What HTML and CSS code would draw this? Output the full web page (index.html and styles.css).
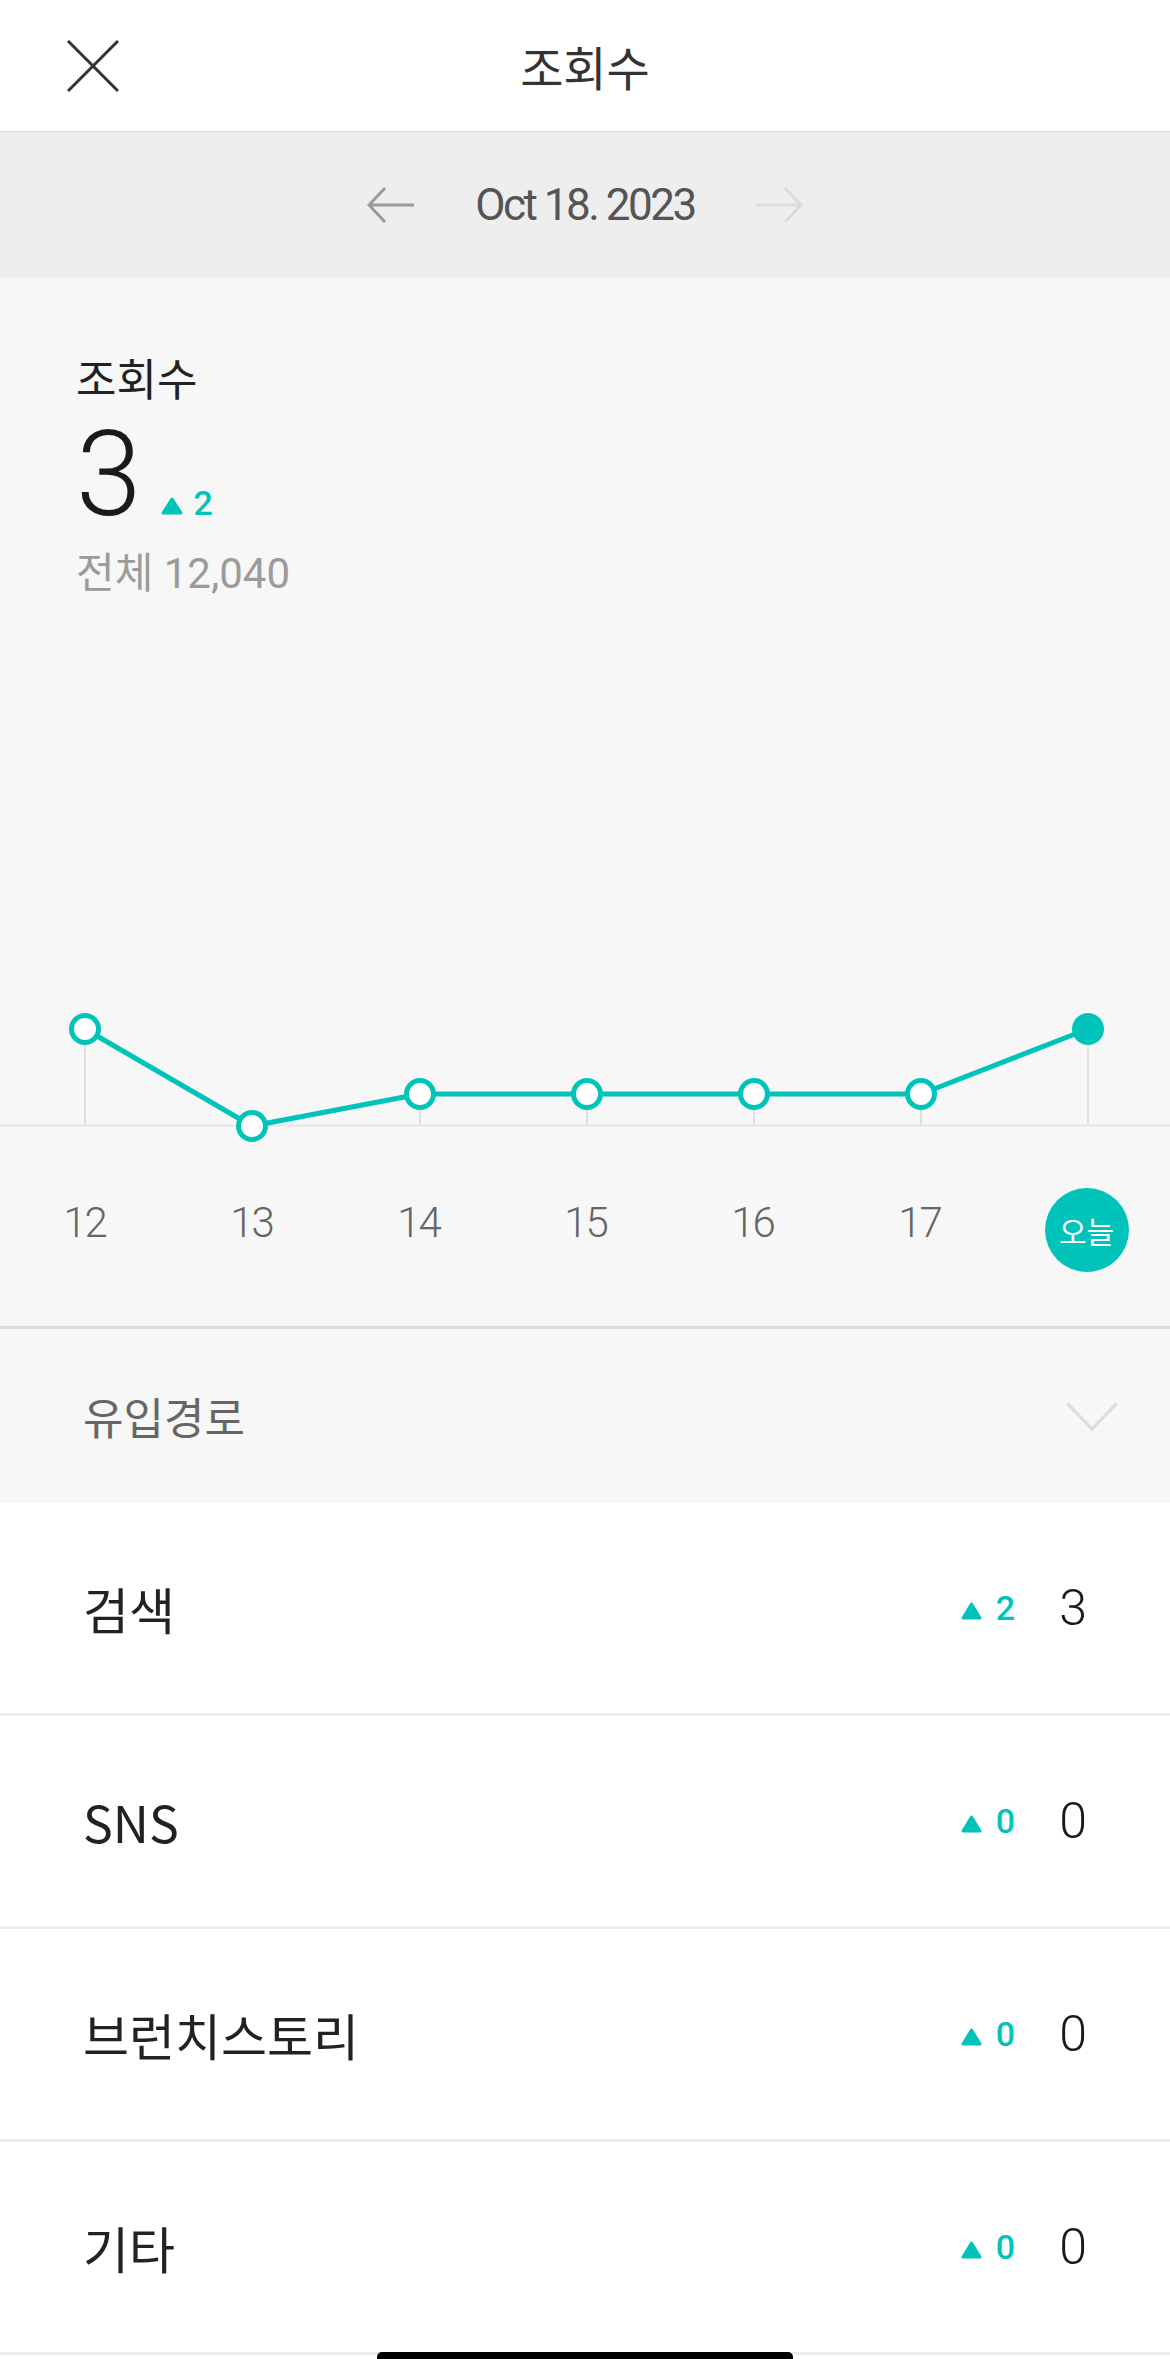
FILE: index.html
```html
<!DOCTYPE html>
<html lang="ko">
<head>
  <meta charset="UTF-8">
  <title>조회수</title>
  <link rel="stylesheet" href="styles.css">
</head>
<body>
  <div class="screen">
    <header class="topbar">
      <button class="close" aria-label="닫기">
        <svg width="52" height="52" viewBox="0 0 52 52">
          <path d="M1 1 L51 51 M51 1 L1 51" stroke="#333" stroke-width="3" fill="none"/>
        </svg>
      </button>
      <h1>조회수</h1>
      <span></span>
    </header>

    <div class="datebar">
      <svg class="arrow prev" width="48" height="38" viewBox="0 0 48 38">
        <path d="M47 19 H3 M18 2 L2 19 L18 36" stroke="#9a9a9a" stroke-width="3" fill="none"/>
      </svg>
      <span class="date">Oct 18. 2023</span>
      <svg class="arrow next" width="48" height="38" viewBox="0 0 48 38">
        <path d="M1 19 H45 M30 2 L46 19 L30 36" stroke="#dcdcdc" stroke-width="3" fill="none"/>
      </svg>
    </div>

    <section class="summary">
      <div class="stat">
        <p class="stat-label">조회수</p>
        <div class="stat-value">
          <span class="big">3</span>
          <span class="delta">
            <svg class="tri" width="22" height="18" viewBox="0 0 22 18"><path d="M11 2 L20 16 H2 Z" fill="#00c3b9" stroke="#00c3b9" stroke-width="3" stroke-linejoin="round"/></svg>2
          </span>
        </div>
        <p class="stat-total">전체 12,040</p>
      </div>

      <svg class="chart" width="1170" height="160" viewBox="0 0 1170 160">
        <line x1="0" y1="134.5" x2="1170" y2="134.5" stroke="#e6e6e6" stroke-width="2"/>
        <g stroke="#e0e0e0" stroke-width="2">
          <line x1="85" y1="38" x2="85" y2="134"/>
          <line x1="420" y1="103" x2="420" y2="134"/>
          <line x1="587" y1="103" x2="587" y2="134"/>
          <line x1="754" y1="103" x2="754" y2="134"/>
          <line x1="921" y1="103" x2="921" y2="134"/>
          <line x1="1088" y1="38" x2="1088" y2="134"/>
        </g>
        <polyline points="85,38 252,135 420,103 587,103 754,103 921,103 1088,38" fill="none" stroke="#00c3b9" stroke-width="5" stroke-linejoin="round"/>
        <g fill="#fff" stroke="#00c3b9" stroke-width="5">
          <circle cx="85" cy="38" r="13.5"/>
          <circle cx="252" cy="135" r="13.5"/>
          <circle cx="420" cy="103" r="13.5"/>
          <circle cx="587" cy="103" r="13.5"/>
          <circle cx="754" cy="103" r="13.5"/>
          <circle cx="921" cy="103" r="13.5"/>
        </g>
        <circle cx="1088" cy="38" r="16" fill="#00c3b9"/>
      </svg>

      <ol class="days">
        <li><span>12</span></li>
        <li><span>13</span></li>
        <li><span>14</span></li>
        <li><span>15</span></li>
        <li><span>16</span></li>
        <li><span>17</span></li>
        <li class="today"><span>오늘</span></li>
      </ol>
    </section>

    <div class="source-head">
      <span>유입경로</span>
      <svg width="54" height="30" viewBox="0 0 54 30">
        <path d="M2 2 L27 28 L52 2" stroke="#dddddd" stroke-width="3" fill="none"/>
      </svg>
    </div>

    <ul class="sources">
      <li class="source">
        <span class="source-name">검색</span>
        <span class="source-delta"><svg class="tri" width="21" height="18" viewBox="0 0 21 18"><path d="M10.5 2 L19 16 H2 Z" fill="#00c3b9" stroke="#00c3b9" stroke-width="3" stroke-linejoin="round"/></svg>2</span>
        <span class="source-count">3</span>
      </li>
      <li class="source">
        <span class="source-name">SNS</span>
        <span class="source-delta"><svg class="tri" width="21" height="18" viewBox="0 0 21 18"><path d="M10.5 2 L19 16 H2 Z" fill="#00c3b9" stroke="#00c3b9" stroke-width="3" stroke-linejoin="round"/></svg>0</span>
        <span class="source-count">0</span>
      </li>
      <li class="source">
        <span class="source-name">브런치스토리</span>
        <span class="source-delta"><svg class="tri" width="21" height="18" viewBox="0 0 21 18"><path d="M10.5 2 L19 16 H2 Z" fill="#00c3b9" stroke="#00c3b9" stroke-width="3" stroke-linejoin="round"/></svg>0</span>
        <span class="source-count">0</span>
      </li>
      <li class="source">
        <span class="source-name">기타</span>
        <span class="source-delta"><svg class="tri" width="21" height="18" viewBox="0 0 21 18"><path d="M10.5 2 L19 16 H2 Z" fill="#00c3b9" stroke="#00c3b9" stroke-width="3" stroke-linejoin="round"/></svg>0</span>
        <span class="source-count">0</span>
      </li>
    </ul>

    <div class="home-bar"></div>
  </div>
</body>
</html>
```

FILE: styles.css
```css
body {
  margin: 0;
  background: #fff;
  font-family: Roboto, "Noto Sans CJK KR", sans-serif;
  color: #222;
}
.screen {
  position: relative;
  width: 1170px;
  height: 2359px;
  overflow: hidden;
}
.topbar {
  height: 131px;
  border-bottom: 1px solid #dedede;
  display: grid;
  grid-template-columns: 1fr auto 1fr;
  align-items: center;
}
.close {
  margin-left: 67px;
  width: 52px;
  height: 52px;
  padding: 0;
  border: none;
  background: none;
  display: flex;
}
.topbar h1 {
  margin: 0;
  font-family: "Noto Sans CJK KR", sans-serif;
  font-size: 47px;
  font-weight: 400;
  color: #333;
  line-height: 56px;
}
.datebar {
  height: 146px;
  background: #eeeeee;
  display: flex;
  justify-content: center;
  align-items: center;
  gap: 60px;
}
.date {
  font-size: 44px;
  letter-spacing: -2.5px;
  color: #555;
  line-height: 52px;
}
.summary {
  background: #f7f7f7;
  height: 1051px;
  border-bottom: 3px solid #dddddd;
  padding-top: 78px;
  box-sizing: border-box;
}
.stat {
  padding-left: 76px;
}
.stat-label {
  margin: 0;
  font-size: 44px;
  line-height: 50px;
  color: #222;
}
.stat-value {
  display: flex;
  align-items: baseline;
  gap: 20px;
  margin-top: 14px;
  height: 110px;
  line-height: 110px;
}
.big {
  font-size: 118px;
  font-weight: 300;
  color: #1a1a1a;
}
.delta {
  font-size: 34px;
  font-weight: 500;
  color: #00c3b9;
  display: flex;
  align-items: baseline;
  gap: 10px;
}
.stat-total {
  margin: 19px 0 0;
  font-size: 42px;
  line-height: 50px;
  color: #9b9b9b;
}
.chart {
  display: block;
  margin-top: 392px;
}
.days {
  list-style: none;
  margin: 37px 0 0;
  padding: 0 0 0 1px;
  display: grid;
  grid-template-columns: repeat(7, 167px);
}
.days li {
  height: 84px;
  display: flex;
  justify-content: center;
  align-items: center;
}
.days span {
  font-size: 42px;
  font-weight: 300;
  letter-spacing: -2px;
  color: #666;
  margin-bottom: 16px;
}
.days .today span {
  width: 84px;
  height: 84px;
  margin: 0;
  border-radius: 50%;
  background: #00c3b9;
  color: #fff;
  font-size: 30px;
  font-weight: 400;
  letter-spacing: 0;
  display: flex;
  justify-content: center;
  align-items: center;
}
.source-head {
  height: 174px;
  background: #f7f7f7;
  padding: 0 51px 0 83px;
  display: flex;
  justify-content: space-between;
  align-items: center;
  font-size: 44px;
  color: #666;
}
.sources {
  list-style: none;
  margin: 0;
  padding: 0;
}
.source {
  height: 210px;
  border-bottom: 3px solid #ececec;
  padding: 0 83px;
  display: flex;
  align-items: center;
}
.source-name {
  flex: 1;
  font-family: "Noto Sans CJK KR", sans-serif;
  font-size: 50px;
  color: #222;
}
.source-delta {
  font-size: 34px;
  font-weight: 500;
  color: #00c3b9;
  display: flex;
  align-items: baseline;
  gap: 14px;
}
.source-count {
  width: 72px;
  text-align: right;
  font-size: 50px;
  font-weight: 300;
  color: #1a1a1a;
}
.home-bar {
  position: absolute;
  left: 377px;
  bottom: 0;
  width: 416px;
  height: 7px;
  background: #000;
  border-radius: 5px 5px 0 0;
}
```
